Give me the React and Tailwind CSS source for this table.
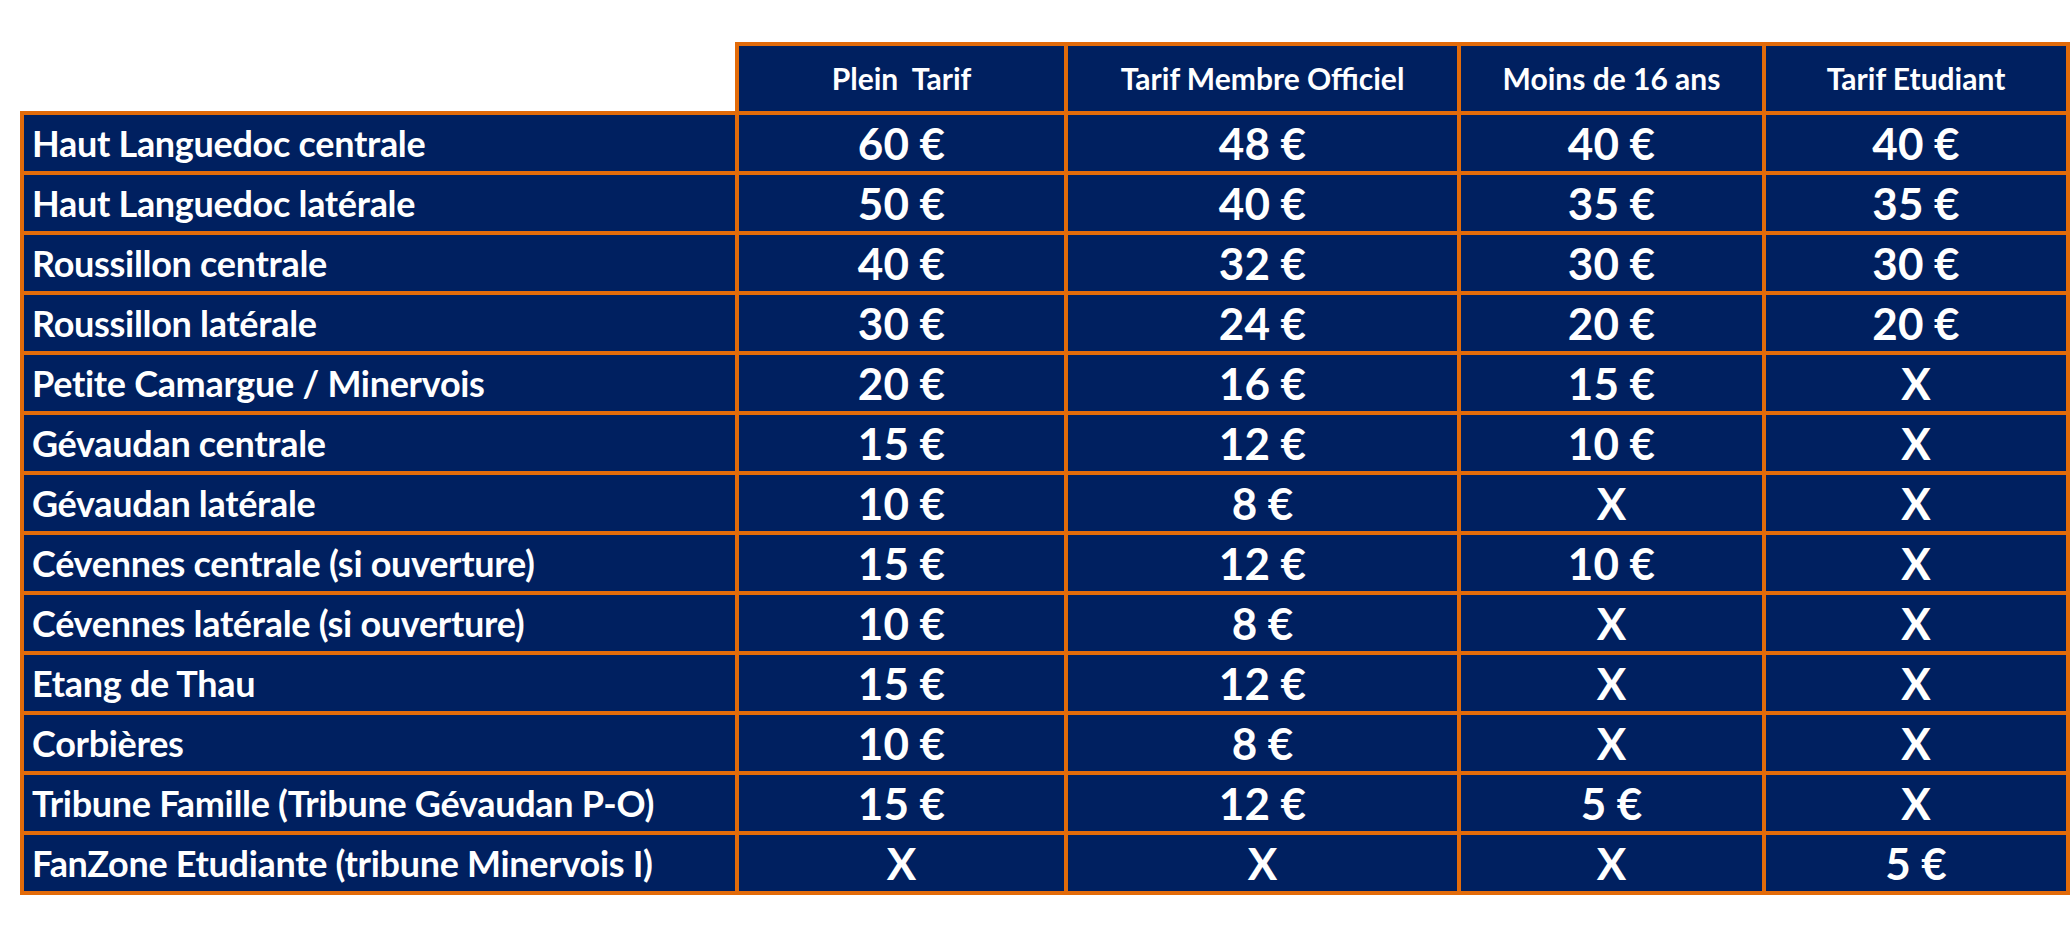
import React from "react";

// grille des tarifs par tribune
const COLS = ["Plein  Tarif", "Tarif Membre Officiel", "Moins de 16 ans", "Tarif Etudiant"];

const ROWS = [
  ["Haut Languedoc centrale", "60 €", "48 €", "40 €", "40 €"],
  ["Haut Languedoc latérale", "50 €", "40 €", "35 €", "35 €"],
  ["Roussillon centrale", "40 €", "32 €", "30 €", "30 €"],
  ["Roussillon latérale", "30 €", "24 €", "20 €", "20 €"],
  ["Petite Camargue / Minervois", "20 €", "16 €", "15 €", "X"],
  ["Gévaudan centrale", "15 €", "12 €", "10 €", "X"],
  ["Gévaudan latérale", "10 €", "8 €", "X", "X"],
  ["Cévennes centrale (si ouverture)", "15 €", "12 €", "10 €", "X"],
  ["Cévennes latérale (si ouverture)", "10 €", "8 €", "X", "X"],
  ["Etang de Thau", "15 €", "12 €", "X", "X"],
  ["Corbières", "10 €", "8 €", "X", "X"],
  ["Tribune Famille (Tribune Gévaudan P-O)", "15 €", "12 €", "5 €", "X"],
  ["FanZone Etudiante (tribune Minervois I)", "X", "X", "X", "5 €"],
];

const GRID = "grid grid-cols-[719px_329px_393px_305px_304px]";
const FONT = { fontFamily: "Lato, 'Liberation Sans', sans-serif" };

export default function App() {
  return (
    <div className="min-h-[937px] w-[2072px] bg-white pt-[42px] pl-[20px] overflow-hidden" style={FONT}>
      {/* en-tête */}
      <div className={GRID}>
        <div className="h-[73px] border-r-4 border-b-4 border-[#e26b0a] bg-white" />
        {COLS.map((c) => (
          <div key={c}
            className="h-[73px] border-t-4 border-r-4 border-b-4 border-[#e26b0a] bg-[#002060] flex items-center justify-center text-white font-bold text-[30px] whitespace-pre">
            {c}
          </div>
        ))}
      </div>

      {/* lignes */}
      {ROWS.map((r) => (
        <div key={r[0]} className={GRID}>
          <div className="h-[60px] border-l-4 border-r-4 border-b-4 border-[#e26b0a] bg-[#002060] flex items-center pl-2 text-white font-bold text-[36px] tracking-[-0.3px] whitespace-nowrap">
            {r[0]}
          </div>
          {r.slice(1).map((v, i) => (
            <div key={i}
              className="h-[60px] border-r-4 border-b-4 border-[#e26b0a] bg-[#002060] flex items-center justify-center text-white font-bold text-[44px]">
              {v}
            </div>
          ))}
        </div>
      ))}
    </div>
  );
}
